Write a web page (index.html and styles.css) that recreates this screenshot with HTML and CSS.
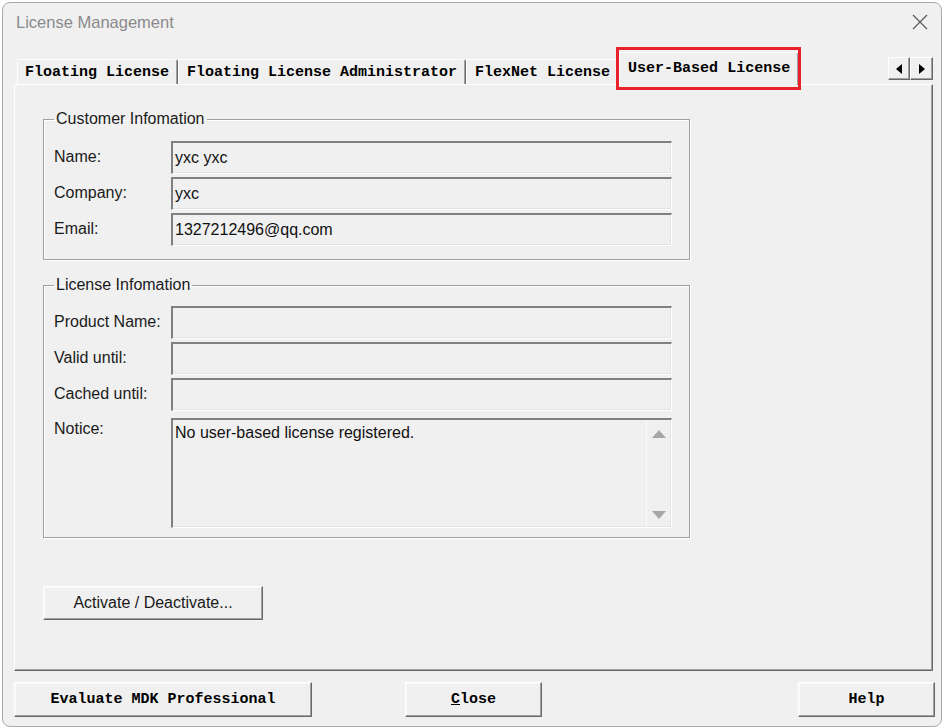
FILE: index.html
```html
<!DOCTYPE html>
<html lang="en">
<head>
    <meta charset="UTF-8">
    <title>License Management</title>
    <link rel="stylesheet" href="styles.css">
</head>
<body>
    <div class="window">
        <div class="titlebar">
            <span class="title">License Management</span>
            <svg class="close-x" width="16" height="16" viewBox="0 0 16 16">
                <path d="M1 1 L15 15 M15 1 L1 15" stroke="#5a5a5a" stroke-width="1.2" fill="none"/>
            </svg>
        </div>

        <div class="tab-row">
            <div class="tabs">
                <div class="tab">Floating License</div>
                <div class="tab">Floating License Administrator</div>
                <div class="tab">FlexNet License</div>
                <div class="tab active">User-Based License</div>
            </div>
            <div class="tab-scroll">
                <div class="scroll-btn">
                    <svg width="6" height="10" viewBox="0 0 6 10"><polygon points="6,0 6,10 0,5" fill="#000"/></svg>
                </div>
                <div class="scroll-btn">
                    <svg width="6" height="10" viewBox="0 0 6 10"><polygon points="0,0 0,10 6,5" fill="#000"/></svg>
                </div>
            </div>
        </div>

        <div class="panel">
            <fieldset class="group customer">
                <legend>Customer Infomation</legend>
                <div class="form-grid">
                    <label>Name:</label>
                    <div class="field">yxc yxc</div>
                    <label>Company:</label>
                    <div class="field">yxc</div>
                    <label>Email:</label>
                    <div class="field">1327212496@qq.com</div>
                </div>
            </fieldset>

            <fieldset class="group license">
                <legend>License Infomation</legend>
                <div class="form-grid">
                    <label>Product Name:</label>
                    <div class="field"></div>
                    <label>Valid until:</label>
                    <div class="field"></div>
                    <label>Cached until:</label>
                    <div class="field"></div>
                    <label class="notice-label">Notice:</label>
                    <div class="field notice">
                        <div class="notice-text">No user-based license registered.</div>
                        <div class="notice-scroll">
                            <svg width="14" height="8" viewBox="0 0 14 8"><polygon points="0,8 14,8 7,0" fill="#a6a6a6"/></svg>
                            <svg width="14" height="8" viewBox="0 0 14 8"><polygon points="0,0 14,0 7,8" fill="#a6a6a6"/></svg>
                        </div>
                    </div>
                </div>
            </fieldset>

            <button class="btn activate">Activate / Deactivate...</button>
        </div>

        <div class="footer">
            <button class="btn mono evaluate">Evaluate MDK Professional</button>
            <button class="btn mono close"><u>C</u>lose</button>
            <button class="btn mono help">Help</button>
        </div>
    </div>
</body>
</html>
```

FILE: styles.css
```css
* {
    margin: 0;
    padding: 0;
    box-sizing: border-box;
}

body {
    background: #fff;
    font-family: "Liberation Sans", Arial, sans-serif;
    font-size: 16px;
    color: #1a1a1a;
}

.window {
    width: 940px;
    height: 725px;
    margin: 2px 2px 1px 2px;
    background: #f0f0f0;
    border: 1px solid #a9a9a9;
    border-radius: 8px;
    display: flex;
    flex-direction: column;
}

/* title bar */
.titlebar {
    height: 47px;
    display: flex;
    align-items: center;
    justify-content: space-between;
    padding: 0 13px 9px 13px;
}

.title {
    font-size: 16.5px;
    color: #8a8a8a;
}

/* tab strip */
.tab-row {
    height: 34px;
    display: flex;
    padding-left: 14px;
    padding-right: 8px;
}

.tabs {
    display: flex;
    align-items: flex-end;
    position: relative;
    z-index: 2;
}

.tab {
    height: 25px;
    padding: 0 8px;
    display: flex;
    align-items: center;
    font-family: "Liberation Mono", "Courier New", monospace;
    font-size: 15px;
    font-weight: bold;
    color: #000;
    background: #f0f0f0;
    border-top: 1px solid #fff;
    border-left: 1px solid #fff;
    border-right: 1px solid #696969;
    border-radius: 2px 2px 0 0;
    box-shadow: inset -1px 0 0 #a0a0a0;
    white-space: pre;
}

.tab:first-child {
    padding-left: 7px;
}

.tab.active {
    height: 33px;
    margin-bottom: -1px;
    padding: 0 8px 2px 8px;
    position: relative;
}

/* red marker frame around the selected tab */
.tab.active::after {
    content: "";
    position: absolute;
    top: -6px;
    bottom: -5px;
    left: -4px;
    right: -3px;
    border: 3px solid #e8212b;
}

.tab-scroll {
    margin-left: auto;
    margin-top: 7px;
    display: flex;
    height: 23px;
}

.scroll-btn {
    width: 22px;
    height: 23px;
    display: flex;
    align-items: center;
    justify-content: center;
    background: #f0f0f0;
    border: 1px solid;
    border-color: #fff #696969 #696969 #fff;
    box-shadow: inset -1px -1px 0 #a0a0a0;
}

.scroll-btn + .scroll-btn {
    width: 23px;
}

/* tab page */
.panel {
    height: 587px;
    margin: 0 8px 0 11px;
    border-top: 1px solid #fff;
    border-left: 1px solid #fff;
    border-right: 1px solid #696969;
    border-bottom: 1px solid #696969;
    box-shadow: inset -1px -1px 0 #a0a0a0;
    display: flex;
    flex-direction: column;
    align-items: flex-start;
}

.group {
    width: 647px;
    margin-left: 28px;
    border: 1px solid #a0a0a0;
    box-shadow: 1px 1px 0 #fff, inset 1px 1px 0 #fff;
}

.group legend {
    padding: 0 2px;
    line-height: 18px;
    color: #1a1a1a;
}

.customer {
    margin-top: 25px;
    padding: 13px 16px 13px 10px;
}

.license {
    margin-top: 16px;
    padding: 12px 16px 9px 10px;
}

.form-grid {
    display: grid;
    grid-template-columns: 117px 501px;
    row-gap: 3px;
}

.form-grid label {
    padding-top: 7px;
    line-height: 18px;
}

.field {
    height: 33px;
    padding: 0 4px 0 2px;
    display: flex;
    align-items: center;
    background: #f0f0f0;
    border-top: 2px solid #808080;
    border-left: 2px solid #808080;
    border-bottom: 1px solid #fff;
    border-right: 1px solid #fff;
    box-shadow: inset -1px -1px 0 #e3e3e3;
    color: #111;
}

.form-grid .notice-label {
    margin-top: 4px;
    padding-top: 2px;
}

.field.notice {
    height: 110px;
    margin-top: 4px;
    padding: 0;
    align-items: stretch;
}

.notice-text {
    flex: 1;
    padding: 4px 0 0 2px;
    line-height: 18px;
}

.notice-scroll {
    width: 25px;
    border-left: 1px solid #fafafa;
    display: flex;
    flex-direction: column;
    justify-content: space-between;
    align-items: center;
    padding: 10px 0 8px 0;
}

/* raised push buttons */
.btn {
    font-family: "Liberation Sans", Arial, sans-serif;
    font-size: 16px;
    color: #1a1a1a;
    background: #f0f0f0;
    border: 1px solid;
    border-color: #fff #696969 #696969 #fff;
    box-shadow: inset -1px -1px 0 #a0a0a0, inset 1px 1px 0 #f8f8f8;
}

.activate {
    width: 220px;
    height: 34px;
    margin-top: 48px;
    margin-left: 28px;
}

.footer {
    display: flex;
    margin-top: 11px;
    padding: 0 6px 0 11px;
}

.btn.mono {
    height: 35px;
    font-family: "Liberation Mono", "Courier New", monospace;
    font-size: 15px;
    font-weight: bold;
    color: #000;
}

.evaluate {
    width: 298px;
}

.close {
    width: 137px;
    margin-left: 93px;
}

.help {
    width: 137px;
    margin-left: auto;
}
```
